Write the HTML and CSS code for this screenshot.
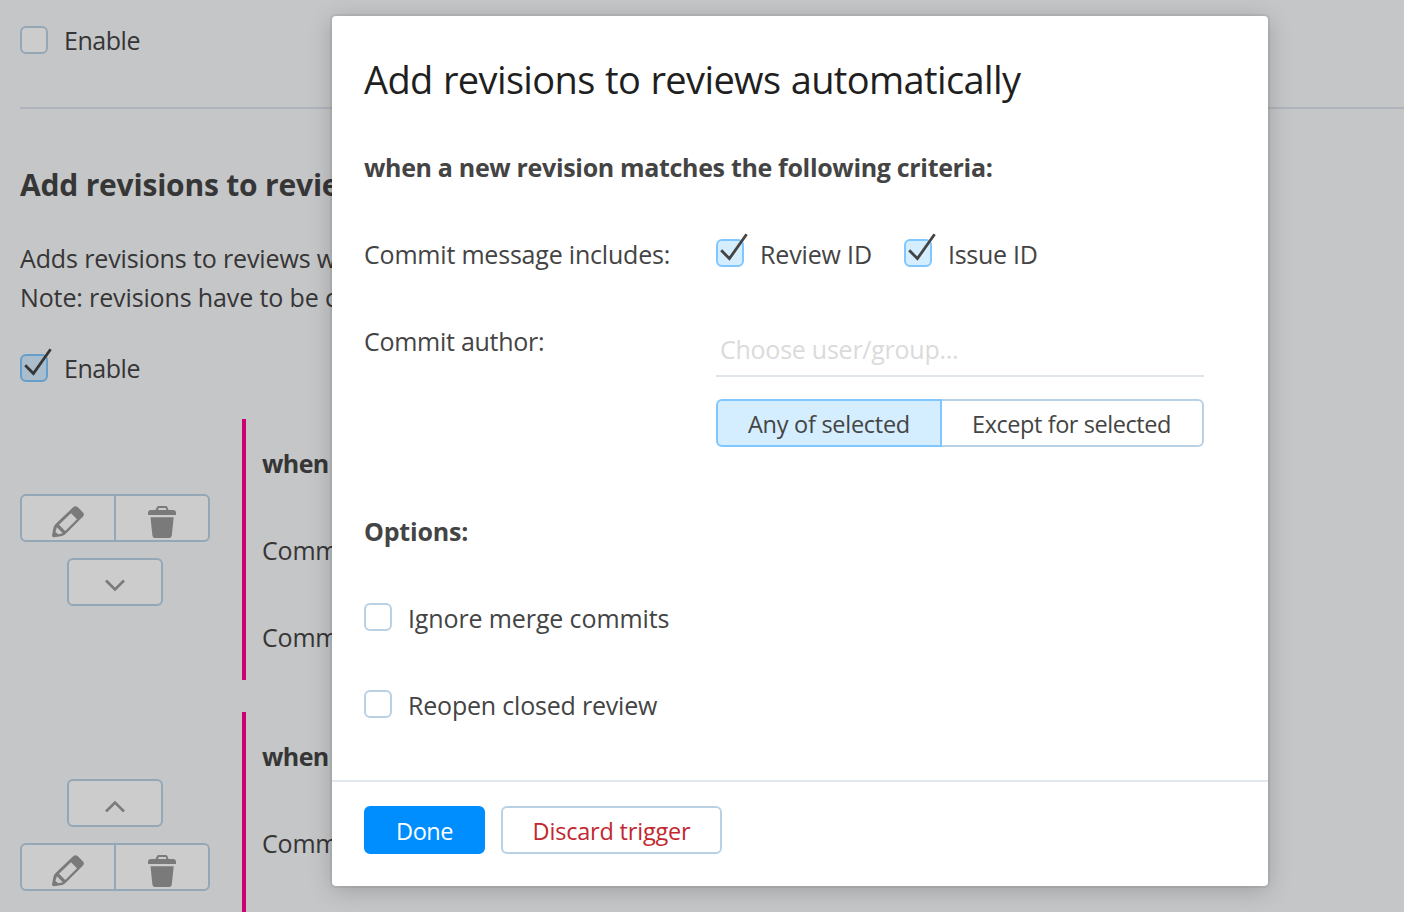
FILE: index.html
```html
<!DOCTYPE html>
<html lang="en">
<head>
<meta charset="utf-8">
<title>Add revisions to reviews automatically</title>
<link rel="stylesheet" href="styles.css">
</head>
<body>
<svg width="0" height="0" class="defs">
  <symbol id="tick" viewBox="0 0 36 36"><path d="M5.2 19.3 13.4 27.6 30.6 3.200" fill="none" stroke="#444" stroke-width="2.800"/></symbol>
  <symbol id="pencil" viewBox="0 0 32 32"><path fill-rule="evenodd" d="M21.2 1.2Q23.2-.8 25.6 1L31 6.4Q32.8 8.600 31 10.600L14 27.600Q12.400 29.400 10 30L2 31.300Q0 31.500 0 29.500L1.500 21.500Q2 19.500 3.600 18ZM19 7.200 7 18.800 13.200 25 25 13.200ZM4.900 21.200 3.400 26 6.300 28.200 10.800 27.200Z"/></symbol>
  <symbol id="trash" viewBox="0 0 28 32"><path fill-rule="evenodd" d="M0 9V7Q0 4 3 4H7.500L9 1Q9.400 0 11 0H17.500Q19 0 19.400 1L20.500 4H25Q28 4 28 7V9ZM10 4H18.500L17.700 2H10.800ZM2.500 11.300H25.700L23.800 29.500Q23.500 32 21 32H7Q4.700 32 4.400 29.500Z"/></symbol>
  <symbol id="down" viewBox="0 0 20 12"><path d="M1 1.500 10 10.500 19 1.500" fill="none" stroke="#999" stroke-width="2.600"/></symbol>
  <symbol id="up" viewBox="0 0 20 12"><path d="M1 11.500 10 2.500 19 11.500" fill="none" stroke="#999" stroke-width="2.600"/></symbol>
</svg>
<main class="page">
  <label class="check"><span class="box"></span><span class="t-enable">Enable</span></label>
  <hr class="rule">
  <h2 class="heading">Add revisions to revie</h2>
  <p class="desc">Adds revisions to reviews w<br>Note: revisions have to be c</p>
  <label class="check"><span class="box on"><svg class="tick"><use href="#tick"/></svg></span><span class="t-enable">Enable</span></label>
  <section class="trigger first">
    <div class="controls">
      <div class="pair"><button class="ib"><svg class="pencil"><use href="#pencil"/></svg></button><button class="ib"><svg class="trash"><use href="#trash"/></svg></button></div>
      <button class="arrow"><svg><use href="#down"/></svg></button>
    </div>
    <div class="rules"><strong>when</strong><span>Comm</span><span>Comm</span></div>
  </section>
  <section class="trigger second">
    <div class="controls">
      <button class="arrow"><svg><use href="#up"/></svg></button>
      <div class="pair"><button class="ib"><svg class="pencil"><use href="#pencil"/></svg></button><button class="ib"><svg class="trash"><use href="#trash"/></svg></button></div>
    </div>
    <div class="rules"><strong>when</strong><span>Comm</span></div>
  </section>
</main>
<div class="overlay">
  <div class="dialog">
    <div class="content">
      <h1 class="title"><span>Add revisions to reviews automatically</span></h1>
      <div class="line sub"><strong class="t-when">when a new revision matches the following criteria:</strong></div>
      <div class="line">
        <span class="name"><span class="t-msg">Commit message includes:</span></span>
        <label class="check"><span class="box on"><svg class="tick"><use href="#tick"/></svg></span><span class="t-rid">Review ID</span></label>
        <label class="check issue"><span class="box on"><svg class="tick"><use href="#tick"/></svg></span><span class="t-iid">Issue ID</span></label>
      </div>
      <div class="line author">
        <span class="name"><span class="t-author">Commit author:</span></span>
        <div class="field">
          <div class="input"><span>Choose user/group...</span></div>
          <div class="seg"><button class="any"><span>Any of selected</span></button><button class="except"><span>Except for selected</span></button></div>
        </div>
      </div>
      <div class="line options"><strong class="t-opt">Options:</strong></div>
      <label class="check line"><span class="box"></span><span class="t-ignore">Ignore merge commits</span></label>
      <label class="check line"><span class="box"></span><span class="t-reopen">Reopen closed review</span></label>
    </div>
    <div class="footer"><button class="done"><span>Done</span></button><button class="discard"><span>Discard trigger</span></button></div>
  </div>
</div>
</body>
</html>
```
FILE: styles.css
```css
* { box-sizing: border-box; }
body {
  margin: 0; height: 912px; overflow: hidden; background: #f7f8fa; color: #444;
  font: 25px/37px "Open Sans", "Noto Sans", sans-serif;
  letter-spacing: -.2px;
}
button { font: inherit; color: inherit; letter-spacing: inherit; margin: 0; padding: 0; }
.defs { display: block; height: 0; }
.page { height: 912px; overflow: hidden; padding: 22px 0 0 20px; white-space: nowrap; }
.check { display: flex; height: 39px; }
.box {
  width: 28px; height: 28px; flex: none; margin: 4px 16px 0 0;
  border: 2px solid #b8d1e5; border-radius: 6px; background: #fff;
}
.box.on { border-color: #80c6ff; background: #d4edff; }
.tick { display: block; width: 36px; height: 36px; margin: -10px 0 0 -2px; }
.box, .tick { overflow: visible; }
.t-enable { letter-spacing: -.45px; }
.rule { height: 2px; border: 0; margin: 46px 0 0; background: #dce3ea; }
.heading { margin: 56px 0 0; font-size: 30px; line-height: 40px; height: 42px; }
.desc { margin: 32px 0; line-height: 39px; height: 79px; letter-spacing: -.13px; }
.trigger { display: flex; gap: 32px; height: 261px; }
.first { margin-top: 30px; }
.second { margin-top: 32px; }
.controls { width: 190px; display: flex; flex-direction: column; align-items: center; gap: 16px; padding-top: 75px; }
.second .controls { padding-top: 67px; }
.pair { display: flex; width: 190px; height: 48px; border: 2px solid #b8d1e5; border-radius: 6px; background: #fff; }
.ib { flex: 1; border: 0; background: none; display: flex; justify-content: center; padding-top: 10px; fill: #999; }
.ib + .ib { border-left: 2px solid #b8d1e5; }
.ib svg { flex: none; height: 32px; }
.pencil { width: 32px; }
.trash { width: 28px; }
.arrow { width: 96px; height: 48px; border: 2px solid #b8d1e5; border-radius: 6px; background: #fff; display: flex; justify-content: center; padding-top: 19px; }
.arrow svg { width: 20px; height: 12px; overflow: visible; }
.rules { flex: 1; border-left: 4px solid #ff008c; padding: 26px 0 22px 16px; display: flex; flex-direction: column; gap: 50px; }
.rules strong { letter-spacing: -.6px; }

.overlay { position: absolute; inset: 0; background: rgba(0, 0, 0, .2); padding: 16px 0 0 332px; }
.dialog {
  width: 936px; height: 870px; background: #fff; border-radius: 4px; white-space: nowrap;
  box-shadow: 0 0 0 2px rgba(0, 0, 0, .06), 0 4px 24px rgba(0, 0, 0, .2);
}
.content { height: 764px; padding: 36px 32px 0; }
.title { margin: 0; font-size: 38px; line-height: 54px; height: 56px; font-weight: 400; color: #1f1f1f; letter-spacing: -.62px; word-spacing: 1px; }
.line { height: 39px; margin-top: 48px; display: flex; }
.line.sub { margin-top: 41px; }
.line .check .box, .check.line .box { margin-top: 3px; }
.t-when { letter-spacing: -.33px; }
.t-ignore { letter-spacing: -.12px; }
.t-iid { letter-spacing: -.28px; }
.t-author { letter-spacing: -.27px; }
.name { width: 352px; }
.issue { margin-left: 32px; }
.t-rid { width: 112px; letter-spacing: -.15px; }
.author { height: 124px; }
.field { width: 488px; }
.input { height: 54px; padding: 8px 4px 0; border-bottom: 2px solid #dfe5eb; color: #dbdbdb; letter-spacing: -.25px; }
.seg { display: flex; height: 48px; margin-top: 22px; }
.seg button, .done, .discard { height: 48px; border: 2px solid #b8d1e5; background: #fff; font-size: 23.500px; line-height: 42px; padding-top: 2px; }
.seg .any { width: 226px; border-color: #80c6ff; background: #d4edff; border-radius: 6px 0 0 6px; letter-spacing: -.27px; }
.seg .except { width: 262px; border-left: 0; border-radius: 0 6px 6px 0; padding-right: 1px; letter-spacing: -.43px; }
.options { margin-top: 66px; }
.footer { height: 106px; border-top: 2px solid #e3e8ee; padding: 24px 32px; display: flex; gap: 16px; }
.done { width: 121px; border-radius: 6px; letter-spacing: -.5px; }
.footer .done { border-color: #008eff; background: #008eff; color: #fff; }
.discard { width: 221px; border-radius: 6px; color: #c22731; }
```
